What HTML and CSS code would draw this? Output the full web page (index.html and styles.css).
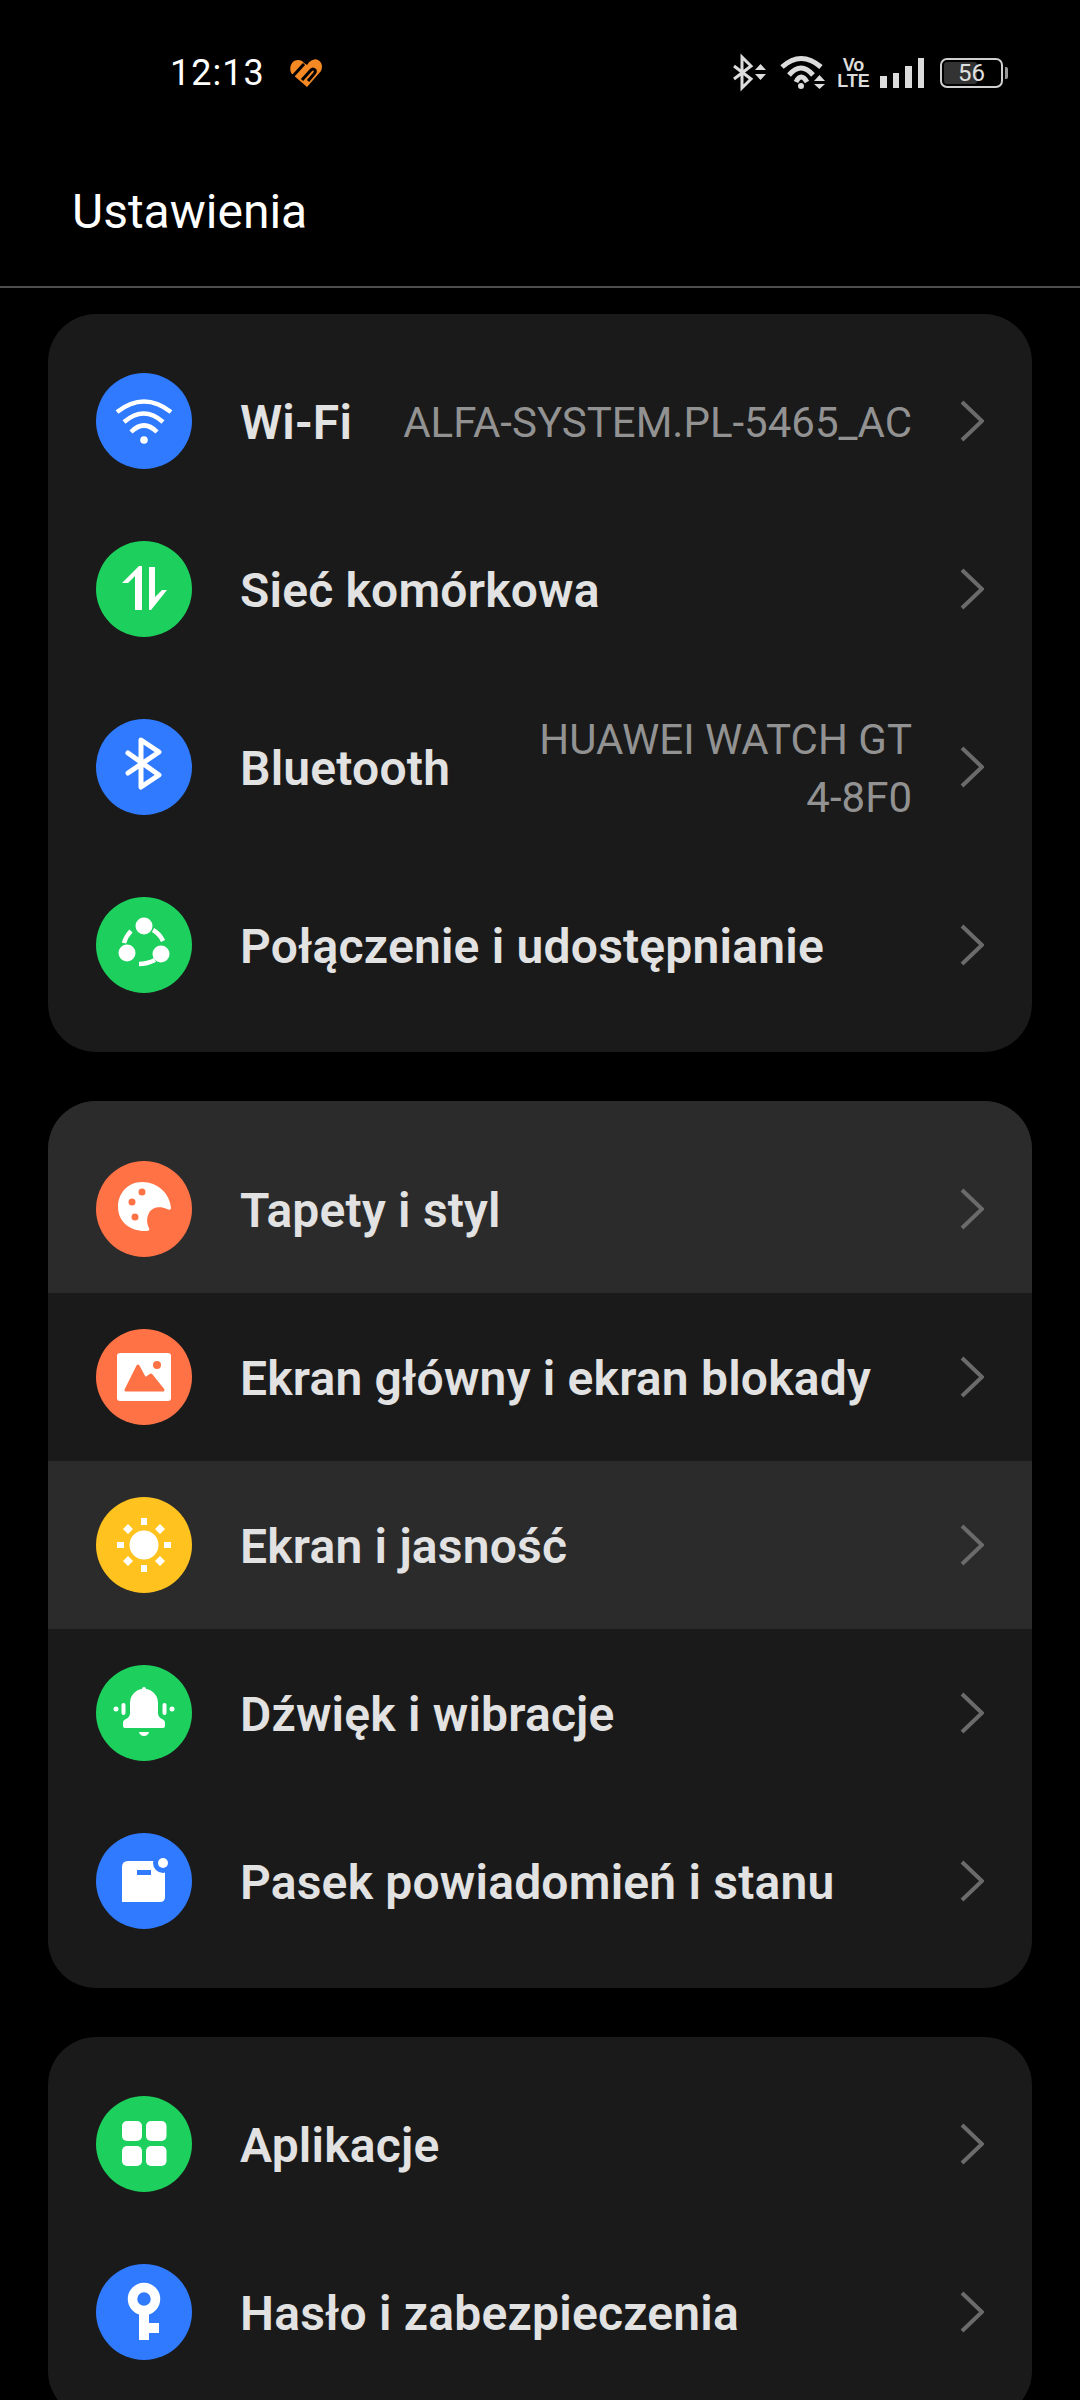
FILE: index.html
```html
<!DOCTYPE html>
<html lang="pl">
<head>
<meta charset="utf-8">
<title>Ustawienia</title>
<link rel="stylesheet" href="styles.css">
</head>
<body>
<div class="screen">
  <div class="status">
    <div class="status-left">
      <span class="time">12:13</span>
      <svg class="heart" viewBox="0 0 34 30"><path class="o" d="M17 7C20 2 25 0 28 2 32 4 33 9 31 13L17 29 2 16C-1 12 0 6 4 3 8 1 12 2 14 5Z"/><path class="hs" d="M3 18 14 6"/><path class="hs" d="M12 22 21 12Q23 10 25 12 26 14 24 16L18 23"/></svg>
    </div>
    <div class="status-right">
      <svg class="s-bt" viewBox="0 0 33 32"><path class="st" d="M1 9 18 22 9 31V0L18 9 1 22"/><path class="f" d="M22 13h11l-5.500-6zM22 17h11l-5.500 6z"/></svg>
      <svg class="s-wifi" viewBox="0 0 45 32"><path class="st w" d="M1 10Q20-7 40 10"/><path class="st w" d="M8 18Q20 4 32 18"/><path class="st w" d="M15 25Q20 15 26 25"/><circle class="f" cx="20" cy="29" r="3"/><path class="f" d="M33 24h11l-5.500-6zM33 27h11l-5.500 5z"/></svg>
      <span class="volte"><span>Vo</span><span>LTE</span></span>
      <span class="bars"><i class="b1"></i><i class="b2"></i><i class="b3"></i><i class="b4"></i></span>
      <span class="batt"><span class="batt-fill"></span><span class="batt-num">56</span></span>
    </div>
  </div>
  <div class="header"><h1 class="title">Ustawienia</h1></div>
  <div class="list">

    <section class="card">
      <div class="row">
        <svg class="ico" viewBox="0 0 96 96"><circle class="blue" cx="48" cy="48" r="48"/><path class="ws" d="M21 39Q48 18 75 39"/><path class="ws" d="M28 49Q48 32 67 49"/><path class="ws" d="M35 59Q48 46 61 59"/><circle class="wf" cx="48" cy="67" r="3.800"/></svg>
        <span class="label wifi">Wi-Fi</span>
        <span class="value">ALFA-SYSTEM.PL-5465_AC</span>
        <svg class="chev" viewBox="0 0 24 42"><path d="M2 2 22 21 2 40"/></svg>
      </div>
      <div class="row">
        <svg class="ico" viewBox="0 0 96 96"><circle class="green" cx="48" cy="48" r="48"/><path class="wf" d="M39 69V35L32 42H26L43 25H46V69Z"/><path class="wf" d="M53 26H59V56L66 49H71L55 69H53Z"/></svg>
        <span class="label">Sieć komórkowa</span>
        <svg class="chev" viewBox="0 0 24 42"><path d="M2 2 22 21 2 40"/></svg>
      </div>
      <div class="row row-tall">
        <svg class="ico" viewBox="0 0 96 96"><circle class="blue" cx="48" cy="48" r="48"/><path class="ws bt" d="M32 34 63 56 45 68V21L63 33 32 54"/></svg>
        <span class="label">Bluetooth</span>
        <span class="value">HUAWEI WATCH GT<br>4-8F0</span>
        <svg class="chev" viewBox="0 0 24 42"><path d="M2 2 22 21 2 40"/></svg>
      </div>
      <div class="row">
        <svg class="ico" viewBox="0 0 96 96"><circle class="green" cx="48" cy="48" r="48"/><circle class="wf" cx="48" cy="29" r="8.500"/><circle class="wf" cx="31" cy="56" r="8.500"/><circle class="wf" cx="65" cy="57" r="8.500"/><path class="ws" d="M57 33Q64 37 67 44"/><path class="ws" d="M35 34Q30 39 28 46"/><path class="ws" d="M43 67Q51 67 59 63"/></svg>
        <span class="label">Połączenie i udostępnianie</span>
        <svg class="chev" viewBox="0 0 24 42"><path d="M2 2 22 21 2 40"/></svg>
      </div>
    </section>

    <section class="card">
      <div class="row row-on">
        <svg class="ico" viewBox="0 0 96 96"><circle class="orange" cx="48" cy="48" r="48"/><path class="wf" d="M46 21C62 21 74 33 75 47 75 49 73 49 71 48 64 45 56 46 53 52 50 58 51 63 53 67 54 70 52 70 49 70 33 70 22 60 22 46 22 32 32 21 46 21Z"/><circle class="of" cx="46" cy="31" r="3.500"/><circle class="of" cx="36" cy="41" r="3.500"/><circle class="of" cx="39" cy="56" r="3.500"/></svg>
        <span class="label">Tapety i styl</span>
        <svg class="chev" viewBox="0 0 24 42"><path d="M2 2 22 21 2 40"/></svg>
      </div>
      <div class="row">
        <svg class="ico" viewBox="0 0 96 96"><circle class="orange" cx="48" cy="48" r="48"/><rect class="wf" x="21" y="24" width="54" height="48" rx="3"/><path class="om" d="M30 61 42 37 49 50 55 46 67 61Z"/><circle class="of" cx="61" cy="36" r="4"/></svg>
        <span class="label">Ekran główny i ekran blokady</span>
        <svg class="chev" viewBox="0 0 24 42"><path d="M2 2 22 21 2 40"/></svg>
      </div>
      <div class="row row-on">
        <svg class="ico" viewBox="0 0 96 96"><circle class="yellow" cx="48" cy="48" r="48"/><circle class="wf" cx="48" cy="48" r="14.500"/><path class="wf" d="M45 21h6v7h-6zM45 68h6v7h-6zM21 45h7v6h-7zM68 45h7v6h-7z"/><path class="wf" d="M32 27 37 32 32 37 27 32zM64 27 69 32 64 37 59 32zM32 59 37 64 32 69 27 64zM64 59 69 64 64 69 59 64z"/></svg>
        <span class="label">Ekran i jasność</span>
        <svg class="chev" viewBox="0 0 24 42"><path d="M2 2 22 21 2 40"/></svg>
      </div>
      <div class="row">
        <svg class="ico" viewBox="0 0 96 96"><circle class="green" cx="48" cy="48" r="48"/><path class="wf" d="M46 24a2 2 0 0 1 4 0 14 14 0 0 1 12 14V48q0 4 4 6 3 1 3 4v3q0 2-2 2H29q-2 0-2-2v-3q0-3 3-4 4-2 4-6V38a14 14 0 0 1 12-14z"/><path class="wf" d="M43 67h10q-1 4-5 4t-5-4z"/><rect class="wf" x="25.500" y="38" width="4" height="12" rx="2"/><rect class="wf" x="66.500" y="38" width="4" height="12" rx="2"/><circle class="wf" cx="20" cy="44" r="2.500"/><circle class="wf" cx="76" cy="44" r="2.500"/></svg>
        <span class="label">Dźwięk i wibracje</span>
        <svg class="chev" viewBox="0 0 24 42"><path d="M2 2 22 21 2 40"/></svg>
      </div>
      <div class="row">
        <svg class="ico" viewBox="0 0 96 96"><circle class="blue" cx="48" cy="48" r="48"/><path class="wf" d="M26 34q0-6 6-6H69V64q0 5-5 5H26z"/><circle class="bf" cx="67" cy="30" r="10"/><circle class="wf" cx="67" cy="30" r="5"/><rect class="bf" x="41" y="37" width="14" height="5"/></svg>
        <span class="label">Pasek powiadomień i stanu</span>
        <svg class="chev" viewBox="0 0 24 42"><path d="M2 2 22 21 2 40"/></svg>
      </div>
    </section>

    <section class="card">
      <div class="row">
        <svg class="ico" viewBox="0 0 96 96"><circle class="green" cx="48" cy="48" r="48"/><rect class="wf" x="26" y="25" width="20" height="20" rx="5"/><rect class="wf" x="50" y="25" width="20.500" height="20" rx="5"/><rect class="wf" x="26" y="50" width="20" height="20" rx="5"/><rect class="wf" x="50" y="50" width="20.500" height="20" rx="5"/></svg>
        <span class="label">Aplikacje</span>
        <svg class="chev" viewBox="0 0 24 42"><path d="M2 2 22 21 2 40"/></svg>
      </div>
      <div class="row">
        <svg class="ico" viewBox="0 0 96 96"><circle class="blue" cx="48" cy="48" r="48"/><circle class="key" cx="48" cy="35" r="11.500"/><path class="wf" d="M43 45h10v14h10v10H53v7H43z"/></svg>
        <span class="label">Hasło i zabezpieczenia</span>
        <svg class="chev" viewBox="0 0 24 42"><path d="M2 2 22 21 2 40"/></svg>
      </div>
    </section>
  </div>
</div>
</body>
</html>
```
FILE: styles.css
```css
html, body { margin: 0; padding: 0; background: #000; }
.screen { width: 1080px; height: 2400px; overflow: hidden; background: #000; font-family: Roboto, "Noto Sans", sans-serif; }

.status { height: 144px; display: flex; justify-content: space-between; align-items: flex-start; padding: 53px 77px 0 170px; box-sizing: border-box; }
.status-left { display: flex; align-items: center; gap: 25px; height: 40px; }
.time { color: #fff; font-size: 36px; line-height: 40px; letter-spacing: 1px; }
.heart { width: 34px; height: 30px; }
.heart .o { fill: #f58a25; }
.hs { fill: none; stroke: #000; stroke-width: 3; }
.status-right { display: flex; align-items: center; height: 40px; }
.st { fill: none; stroke: #dcdcdc; stroke-width: 3; }
.st.w { stroke-width: 5; }
.f { fill: #dcdcdc; }
.s-bt { width: 33px; height: 32px; margin-right: 15px; overflow: visible; }
.s-wifi { width: 45px; height: 32px; margin-right: 17px; overflow: visible; }
.volte { display: flex; flex-direction: column; color: #dcdcdc; font-family: "Liberation Sans Narrow", "Liberation Sans", sans-serif; font-weight: 700; font-size: 18px; line-height: 16px; width: 21px; align-items: center; margin-right: 16px; }
.bars { display: flex; align-items: flex-end; gap: 6px; height: 30px; margin-right: 16px; }
.bars i { display: block; width: 6.500px; background: #dcdcdc; }
.b1 { height: 12px; } .b2 { height: 15px; } .b3 { height: 22px; } .b4 { height: 30px; }
.batt { position: relative; width: 63px; height: 30px; border: 2px solid #cfcfcf; border-radius: 7px; box-sizing: border-box; display: flex; align-items: center; justify-content: center; }
.batt::after { content: ""; position: absolute; right: -7px; top: 7px; width: 3px; height: 12px; background: #999; border-radius: 0 2px 2px 0; }
.batt-fill { position: absolute; left: 2px; top: 2px; bottom: 2px; width: 33px; background: #333; border-radius: 3px; }
.batt-num { position: relative; color: #e0e0e0; font-size: 24px; line-height: 26px; }

.header { height: 144px; box-sizing: border-box; border-bottom: 2px solid #4e4e4e; }
.title { margin: 0; padding: 44px 0 0 72px; color: #fff; font-size: 48px; font-weight: 400; line-height: 48px; }

.list { display: flex; flex-direction: column; gap: 49px; padding: 26px 48px 0; }
.card { background: #1a1a1a; border-radius: 48px; overflow: hidden; padding: 23px 0; }
.card:nth-child(2) { padding-top: 0; }
.row { display: flex; align-items: center; height: 168px; padding: 0 48px; box-sizing: border-box; }
.row-tall { height: 188px; }
.row-on { background: #2b2b2b; }
.card:nth-child(2) .row:first-child { height: 192px; padding-top: 24px; }
.ico { width: 96px; height: 96px; flex: none; margin-right: 48px; }
.label { color: #e2e2e2; font-size: 48px; font-weight: 600; line-height: 56px; letter-spacing: .2px; white-space: nowrap; padding-top: 4px; }
.label.wifi { margin-right: 50px; }
.value { margin-left: auto; color: #929292; font-size: 42px; line-height: 58px; text-align: right; white-space: nowrap; padding-top: 4px; }
.chev { width: 24px; height: 42px; flex: none; margin-left: auto; fill: none; stroke: #6b6b6b; stroke-width: 4; }
.value + .chev { margin-left: 48px; }

.blue { fill: #2f7aff; } .green { fill: #1dd05d; } .orange { fill: #ff7246; } .yellow { fill: #ffc21f; }
.ws { fill: none; stroke: #fff; stroke-width: 4.500; }
.ws.bt { stroke-width: 5; stroke-linecap: round; stroke-linejoin: round; }
.wf { fill: #fff; }
.of { fill: #ff7246; }
.om { fill: #ff7246; stroke: #ff7246; stroke-width: 3; stroke-linejoin: round; }
.bf { fill: #2f7aff; }
.key { fill: none; stroke: #fff; stroke-width: 9.500; }
```
